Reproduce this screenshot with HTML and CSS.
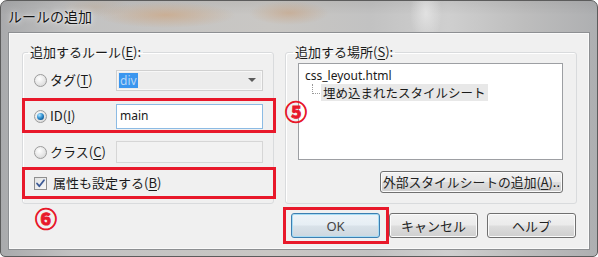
FILE: index.html
```html
<!DOCTYPE html>
<html lang="ja">
<head>
<meta charset="utf-8">
<title>ルールの追加</title>
<link rel="stylesheet" href="styles.css">
</head>
<body>
<div class="window">
  <div class="titlebar"><span class="title">ルールの追加</span></div>
  <div class="client">
    <div class="groups">
      <fieldset class="group group-rule">
        <legend>追加するルール(<u>E</u>):</legend>
        <div class="rule-grid">
          <div class="opt"><span class="radio"></span><span>タグ(<u>T</u>)</span></div>
          <div class="combo"><span class="sel">div</span><span class="arrow"></span></div>
          <div class="opt"><span class="radio on"></span><span>ID(<u>I</u>)</span></div>
          <div class="input focus">main</div>
          <div class="opt"><span class="radio"></span><span>クラス(<u>C</u>)</span></div>
          <div class="input disabled"></div>
          <div class="opt check-row"><span class="check"><svg width="11" height="11" viewBox="0 0 11 11"><path d="M2 5.5 L4.3 8.2 L9 2.2" fill="none" stroke="#3d5a96" stroke-width="1.8" stroke-linecap="round" stroke-linejoin="round"/></svg></span><span>属性も設定する(<u>B</u>)</span></div>
        </div>
      </fieldset>
      <fieldset class="group group-place">
        <legend>追加する場所(<u>S</u>):</legend>
        <div class="listbox">
          <div class="item root">css_leyout.html</div>
          <div class="item child"><span class="tree"></span><span class="selected">埋め込まれたスタイルシート</span></div>
        </div>
        <div class="ext-row"><button class="btn small">外部スタイルシートの追加(<u>A</u>)..</button></div>
      </fieldset>
    </div>
    <div class="actions">
      <button class="btn default">OK</button>
      <button class="btn">キャンセル</button>
      <button class="btn">ヘルプ</button>
    </div>
    <div class="mark box-id"></div>
    <div class="mark box-attr"></div>
    <div class="mark box-ok"></div>
    <div class="num num5">⑤</div>
    <div class="num num6">⑥</div>
  </div>
</div>
</body>
</html>
```
FILE: styles.css
```css
html, body {
  margin: 0;
  padding: 0;
}
body {
  width: 598px;
  height: 257px;
  overflow: hidden;
  background: #fff;
  font-family: "Noto Sans CJK JP", "Noto Sans", sans-serif;
  font-size: 13px;
  color: #1a1a1a;
}
u {
  text-decoration: underline;
  text-underline-offset: 2px;
  text-decoration-thickness: 1px;
}
.window {
  box-sizing: border-box;
  width: 598px;
  height: 257px;
  display: flex;
  flex-direction: column;
  padding: 0 7px 6px 7px;
  border: 1px solid #5c5c5c;
  border-radius: 7px 7px 5px 5px;
  background:
    radial-gradient(ellipse 70px 13px at 165px 14px, rgba(205, 160, 118, 0.6), rgba(205,160,118,0) 100%),
    radial-gradient(ellipse 40px 12px at 288px 12px, rgba(200, 155, 115, 0.5), rgba(200,155,115,0) 100%),
    radial-gradient(ellipse 35px 10px at 95px 6px, rgba(190, 170, 150, 0.45), rgba(190,170,150,0) 100%),
    radial-gradient(ellipse 16px 30px at 425px 12px, rgba(235, 235, 235, 0.7), rgba(235,235,235,0) 100%),
    linear-gradient(180deg, rgba(0,0,0,0.06) 0px, rgba(0,0,0,0) 14px),
    linear-gradient(90deg, #a9aaac 0%, #c2c2c2 12%, #c9c7c4 45%, #c2c2c2 62%, #cfcfcf 75%, #bdbdbd 88%, #aeafb1 100%);
}
.titlebar {
  height: 31px;
  flex: none;
  display: flex;
  align-items: center;
}
.title {
  font-size: 14px;
  line-height: 18px;
  color: #151515;
  margin-top: -1px;
  text-shadow: 0 0 6px rgba(255,255,255,0.9), 0 0 2px rgba(255,255,255,0.8);
}
.client {
  position: relative;
  flex: 1;
  box-sizing: border-box;
  background: #f0f0f0;
  border: 1px solid #8d8f92;
  box-shadow: inset 0 0 0 1px #fafafa;
  padding: 11px 12px 0 13px;
}
.groups {
  display: flex;
  gap: 11px;
}
.group {
  margin: 0;
  padding: 0;
  min-width: 0;
  box-sizing: border-box;
  border: 1px solid #d9dbdd;
  border-radius: 3px;
  box-shadow: inset 1px 1px 0 #fff;
}
.group legend {
  padding: 0 2px;
  font-size: 13px;
  line-height: 16px;
}
.group-rule {
  width: 252px;
}
.group-rule legend {
  margin-left: 5px;
}
.group-place {
  width: 292px;
}
.group-place legend {
  margin-left: 7px;
}
.rule-grid {
  display: grid;
  grid-template-columns: 83px 147px;
  grid-template-rows: 36px 36px 36px 26px;
  align-items: center;
  padding: 2px 10px 7px 10px;
}
.opt {
  display: flex;
  align-items: center;
  gap: 3px;
  line-height: 16px;
  white-space: nowrap;
}
.radio {
  position: relative;
  box-sizing: border-box;
  width: 13px;
  height: 13px;
  margin-left: 1px;
  border-radius: 50%;
  border: 1px solid #9c9c9c;
  background: radial-gradient(circle at 40% 35%, #ffffff 0%, #e6e6e6 55%, #cfcfcf 100%);
}
.radio.on::after {
  content: "";
  position: absolute;
  left: 2px;
  top: 2px;
  width: 7px;
  height: 7px;
  border-radius: 50%;
  background: radial-gradient(circle at 35% 30%, #b8e6ff 0%, #3c9ad8 40%, #0f5c9a 75%, #0a3d6a 100%);
}
.check-row {
  grid-column: 1 / 3;
  gap: 6px;
}
.check {
  box-sizing: border-box;
  width: 13px;
  height: 13px;
  margin-left: 1px;
  border: 1px solid #8f8f8f;
  background: linear-gradient(135deg, #e2e2e2, #f8f8f8);
  display: flex;
  align-items: center;
  justify-content: center;
}
.check svg {
  display: block;
}
.combo {
  box-sizing: border-box;
  height: 21px;
  border: 1px solid #d0d0d0;
  background: #ececec;
  box-shadow: inset 0 0 0 1px #f7f7f7;
  display: flex;
  align-items: center;
  padding: 0 0 0 2px;
  font-family: "Noto Sans", sans-serif;
  font-size: 12px;
}
.sel {
  background: #3b96ef;
  color: #b8d6f6;
  line-height: 15px;
  padding: 0 1px;
}
.arrow {
  margin-left: auto;
  margin-right: 6px;
  width: 0;
  height: 0;
  border-left: 4px solid transparent;
  border-right: 4px solid transparent;
  border-top: 4px solid #5a5a5a;
}
.input {
  box-sizing: border-box;
  border: 1px solid #c6c6c6;
  background: #fff;
  font-family: "Noto Sans", sans-serif;
  font-size: 12px;
  line-height: 18px;
  padding: 0 3px;
}
.input.focus {
  height: 25px;
  border-color: #8cbbe4;
  padding-top: 2px;
}
.input.disabled {
  height: 22px;
  background: #f2f2f2;
  border-color: #d6d6d6;
}
.listbox {
  box-sizing: border-box;
  height: 97px;
  margin: 3px 13px 0 12px;
  border: 1px solid #9d9fa3;
  background: #fff;
  padding: 3px 0 0 6px;
}
.item {
  line-height: 17px;
  white-space: nowrap;
}
.item.root {
  font-family: "Noto Sans", sans-serif;
  font-size: 12px;
}
.item.child {
  display: flex;
  align-items: flex-start;
}
.tree {
  width: 8px;
  height: 10px;
  margin-left: 7px;
  margin-right: 1px;
  border-left: 1px dotted #9a9a9a;
  border-bottom: 1px dotted #9a9a9a;
  box-sizing: border-box;
}
.selected {
  font-size: 12.5px;
  line-height: 17px;
  background: #e8e8e8;
  padding: 0 2px;
}
.ext-row {
  display: flex;
  justify-content: flex-end;
  margin: 11px 13px 0 0;
}
.btn {
  box-sizing: border-box;
  height: 25px;
  width: 89px;
  font-family: "Noto Sans CJK JP", "Noto Sans", sans-serif;
  font-size: 13px;
  line-height: 16px;
  color: #222;
  border: 1px solid #707070;
  border-radius: 3px;
  background: linear-gradient(180deg, #f2f2f2 0%, #ebebeb 48%, #dddddd 52%, #cfcfcf 100%);
  box-shadow: inset 0 0 0 1px #fbfbfb;
  padding: 0;
}
.btn.small {
  width: auto;
  height: 22px;
  padding: 0 2px;
  font-size: 12.8px;
}
.btn.default {
  border-color: #3c7fb1;
  box-shadow: inset 0 0 0 1px #a6dcf5;
  background: linear-gradient(180deg, #eef4f8 0%, #e6eef4 48%, #d9e2e9 52%, #ccd7df 100%);
  color: #444;
  font-family: "Noto Sans", sans-serif;
}
.actions {
  display: flex;
  justify-content: flex-end;
  gap: 9px;
  margin: 9px 1px 0 0;
}
.mark {
  position: absolute;
  box-sizing: border-box;
  border: 3px solid #e8182a;
}
.box-id {
  left: 13px;
  top: 65px;
  width: 254px;
  height: 35px;
}
.box-attr {
  left: 13px;
  top: 134px;
  width: 254px;
  height: 32px;
}
.box-ok {
  left: 274px;
  top: 174px;
  width: 106px;
  height: 37px;
}
.num {
  position: absolute;
  color: #e8182a;
  font-size: 22px;
  line-height: 22px;
  font-weight: bold;
  -webkit-text-stroke: 0.9px #e8182a;
}
.num5 {
  left: 276px;
  top: 66px;
}
.num6 {
  left: 26px;
  top: 173px;
}
```
